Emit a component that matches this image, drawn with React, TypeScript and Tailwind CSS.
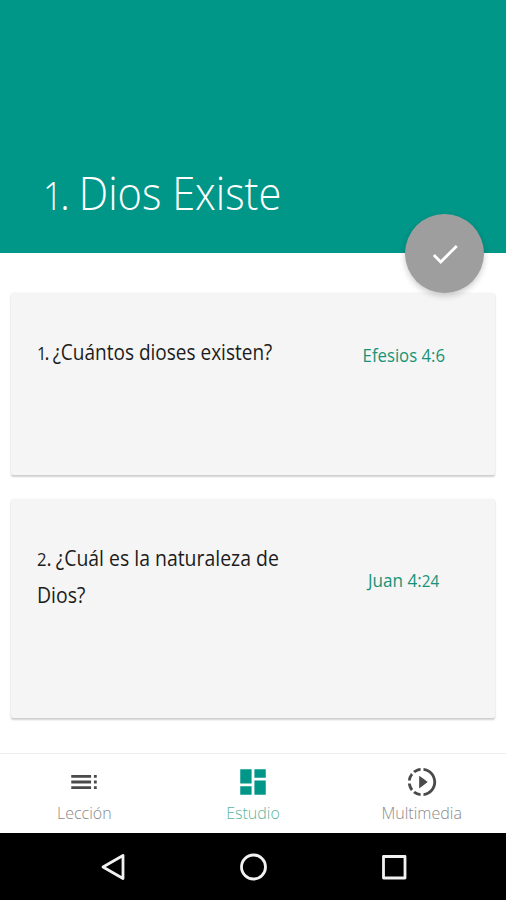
import { ReactNode } from "react";
import { MdCheck, MdDashboard, MdSlowMotionVideo, MdToc } from "react-icons/md";

const QuestionCard = ({
  className,
  question,
  verse,
}: {
  className: string;
  question: ReactNode;
  verse: ReactNode;
}) => (
  <div
    className={`mx-[11px] flex rounded-[2px] bg-[#f5f5f5] shadow-[0_2px_2px_rgba(0,0,0,0.18),0_0_2px_rgba(0,0,0,0.08)] ${className}`}
  >
    <div className="w-[301px] shrink-0 pl-[26px] pt-[41px] text-[21px] leading-[36px] text-[#1c1c1c]">
      {question}
    </div>
    <div className="flex flex-1 justify-center text-[19px] leading-[28px] text-[#179377]">
      {verse}
    </div>
  </div>
);

const Tab = ({ icon, label, active }: { icon: ReactNode; label: ReactNode; active?: boolean }) => (
  <div
    className={`flex flex-1 flex-col items-center pt-[11px] ${active ? "text-[#009688]" : "text-[#4a4a4a]"}`}
  >
    {icon}
    <span
      className={`mt-[2px] text-[16px] leading-[24px] whitespace-nowrap ${active ? "text-[#5cb59e]" : "text-[#8a8a8a]"}`}
    >
      {label}
    </span>
  </div>
);

const App = () => {
  return (
    <div className="flex h-[900px] w-[506px] flex-col overflow-hidden bg-white font-['Open_Sans',sans-serif] font-light">
      {/* Header */}
      <header className="relative h-[253px] shrink-0 bg-[#009688] pl-[43px] pt-[160px] text-white">
        <h1 className="origin-left scale-x-[0.904] text-[46px] leading-[64px] whitespace-nowrap">
          <span className="text-[38px] tracking-[-3px]">1</span>
          <span className="tracking-[-2px]">.</span> Dios Existe
        </h1>
        <button className="absolute left-[405px] top-[214px] flex size-[79px] items-center justify-center rounded-full bg-[#9e9e9e] shadow-[0_3px_6px_rgba(0,0,0,0.2)]">
          <MdCheck size={34} />
        </button>
      </header>

      {/* Questions */}
      <main className="flex flex-1 flex-col pt-10">
        <QuestionCard
          className="h-[182px]"
          question={
            <p className="origin-left scale-x-[0.905] whitespace-nowrap font-normal">
              <span className="text-[18px] tracking-[-2px]">1</span>
              <span className="tracking-[-2px]">.</span> ¿Cuántos dioses existen?
            </p>
          }
          verse={
            <p className="ml-px scale-x-[0.88] pt-[48px] font-normal whitespace-nowrap">
              Efesios 4:6
            </p>
          }
        />
        <QuestionCard
          className="mt-6 h-[219px]"
          question={
            <p className="origin-left scale-x-[0.925] whitespace-nowrap font-normal">
              <span className="text-[18px]">2</span>
              <span className="tracking-[-1px]">.</span> ¿Cuál es la naturaleza de
              <br />
              Dios?
            </p>
          }
          verse={
            <p className="scale-x-[0.9] pt-[67px] font-normal whitespace-nowrap">
              Juan 4:<span className="text-[17px]">24</span>
            </p>
          }
        />
      </main>

      {/* Bottom tabs */}
      <nav className="flex h-[80px] shrink-0 border-t border-[#eeeeee]">
        <Tab icon={<MdToc size={34} />} label="Lección" />
        <Tab icon={<MdDashboard size={34} />} label="Estudio" active />
        <Tab icon={<MdSlowMotionVideo size={34} />} label="Multimedia" />
      </nav>

      {/* Android buttons */}
      <div className="flex h-[67px] shrink-0 items-center justify-between bg-black pl-[99px] pr-[98px]">
        <svg width="28" height="28" viewBox="0 0 28 28" fill="none" stroke="#f2f2f2" strokeWidth="2.8" strokeLinejoin="round">
          <path d="M24 2.5v23L4 14z" />
        </svg>
        <svg width="28" height="28" viewBox="0 0 28 28" fill="none" stroke="#f2f2f2" strokeWidth="2.8">
          <circle cx="13.5" cy="14" r="12" />
        </svg>
        <svg width="28" height="28" viewBox="0 0 28 28" fill="none" stroke="#f2f2f2" strokeWidth="2.8" strokeLinejoin="round">
          <path d="M3.5 3.5h21.5v21.5h-21.5z" />
        </svg>
      </div>
    </div>
  );
};

export default App;
